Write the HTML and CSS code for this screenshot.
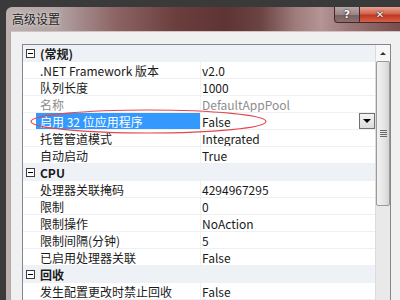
FILE: index.html
```html
<!DOCTYPE html>
<html lang="zh-CN">
<head>
<meta charset="utf-8">
<title>高级设置</title>
<link rel="stylesheet" href="styles.css">
</head>
<body>
<div class="screen">
  <div class="window">
    <div class="titlebar">
      <span class="title">高级设置</span>
      <div class="caption-buttons">
        <div class="cbtn help">?</div>
        <div class="cbtn close">✕</div>
      </div>
    </div>
    <div class="client">
      <div class="grid">
        <div class="rows">
          <div class="row cat"><span class="gutter"><span class="toggle"></span></span><span class="label">(常规)</span></div>
          <div class="row"><span class="gutter"></span><span class="label">.NET Framework 版本</span><span class="value">v2.0</span></div>
          <div class="row"><span class="gutter"></span><span class="label">队列长度</span><span class="value">1000</span></div>
          <div class="row readonly"><span class="gutter"></span><span class="label">名称</span><span class="value">DefaultAppPool</span></div>
          <div class="row selected"><span class="gutter"></span><span class="label">启用 32 位应用程序</span><span class="value">False<span class="dropdown"><span class="tri"></span></span></span></div>
          <div class="row"><span class="gutter"></span><span class="label">托管管道模式</span><span class="value">Integrated</span></div>
          <div class="row"><span class="gutter"></span><span class="label">自动启动</span><span class="value">True</span></div>
          <div class="row cat"><span class="gutter"><span class="toggle"></span></span><span class="label">CPU</span></div>
          <div class="row"><span class="gutter"></span><span class="label">处理器关联掩码</span><span class="value">4294967295</span></div>
          <div class="row"><span class="gutter"></span><span class="label">限制</span><span class="value">0</span></div>
          <div class="row"><span class="gutter"></span><span class="label">限制操作</span><span class="value">NoAction</span></div>
          <div class="row"><span class="gutter"></span><span class="label">限制间隔(分钟)</span><span class="value">5</span></div>
          <div class="row"><span class="gutter"></span><span class="label">已启用处理器关联</span><span class="value">False</span></div>
          <div class="row cat"><span class="gutter"><span class="toggle"></span></span><span class="label">回收</span></div>
          <div class="row"><span class="gutter"></span><span class="label">发生配置更改时禁止回收</span><span class="value">False</span></div>
        </div>
        <div class="scrollbar">
          <div class="sb-up"><span class="up-tri"></span></div>
          <div class="sb-thumb"><span class="grip"></span></div>
          <div class="sb-track"></div>
        </div>
      </div>
    </div>
  </div>
  <svg class="annotation" width="400" height="300" viewBox="0 0 400 300">
    <ellipse cx="148.5" cy="121.5" rx="117.5" ry="11.5" fill="none" stroke="#e2474c" stroke-width="1.2"/>
  </svg>
</div>
</body>
</html>
```
FILE: styles.css
```css
* { box-sizing: border-box; }
html, body { margin: 0; padding: 0; }
body {
  width: 400px;
  height: 300px;
  overflow: hidden;
  background: #3a3a3a;
  font-family: "Noto Sans CJK SC", "Noto Sans", sans-serif;
  font-size: 12px;
  color: #1a1a1a;
}
.screen {
  position: relative;
  width: 400px;
  height: 300px;
  padding: 7px 0 0 6px;
  overflow: hidden;
}
.window {
  width: 394px;
  height: 293px;
  border-radius: 6px 0 0 0;
  background: linear-gradient(90deg, #bcb0b0 0px, #b4a4a4 50px, #8c6464 110px, #6c3e3e 170px, #5e3434 220px, #6c4444 255px, #a07c7c 290px, #b49494 315px, #9a7474 345px, #7a4c4c 394px);
  padding-left: 4px;
  display: flex;
  flex-direction: column;
  overflow: hidden;
}
.titlebar {
  height: 24px;
  flex-shrink: 0;
  display: flex;
  align-items: flex-start;
}
.title {
  margin: 4px 0 0 2px;
  font-size: 12px;
  line-height: 16px;
  color: #1c1c1c;
  text-shadow: 0 0 4px rgba(255,255,255,0.6), 0 0 2px rgba(255,255,255,0.5);
}
.caption-buttons {
  margin-left: auto;
  display: flex;
  height: 16px;
}
.cbtn {
  height: 16px;
  display: flex;
  align-items: center;
  justify-content: center;
  color: #fff;
  font-family: "DejaVu Sans", sans-serif;
  font-weight: bold;
  font-size: 11px;
  text-shadow: 0 0 2px #333, 0 0 1px #000;
  border: 1px solid #3e2a2a;
  border-top: none;
}
.help {
  width: 25px;
  border-radius: 0 0 0 4px;
  border-right: none;
  background: linear-gradient(180deg, #b8a8a8 0%, #9a8484 50%, #7a6060 55%, #8c7070 100%);
}
.close {
  width: 41px;
  border-right: none;
  background: linear-gradient(180deg, #e8a494 0%, #d06450 45%, #c03820 55%, #d8604a 100%);
  font-size: 10px;
}
.client {
  flex: 1 1 auto;
  min-height: 0;
  overflow: hidden;
  background: #f0f0f0;
  border-top: 1px solid #cfc4c4;
  border-left: 1px solid #b4a8a8;
  padding: 12px 9px 0 11px;
}
.grid {
  width: 369px;
  height: 260px;
  border: 1px solid #828790;
  border-bottom: none;
  background: #fff;
  display: flex;
}
.rows {
  flex: 1;
  display: flex;
  flex-direction: column;
}
.row {
  height: 17px;
  display: flex;
  flex-shrink: 0;
  border-bottom: 1px solid #eef0f3;
  white-space: nowrap;
}
.gutter {
  width: 13px;
  flex-shrink: 0;
  display: flex;
  align-items: center;
}
.label {
  width: 164px;
  height: 16px;
  line-height: 18px;
  flex-shrink: 0;
  padding-left: 4px;
  overflow: hidden;
}
.value {
  flex: 1;
  height: 16px;
  line-height: 18px;
  overflow: hidden;
  display: flex;
  align-items: flex-start;
  padding-left: 1px;
  border-left: 1px solid #eef0f3;
}
.cat {
  background: #eef2f7;
  border-bottom-color: #eef2f7;
}
.cat .label {
  font-weight: bold;
  width: auto;
}
.toggle {
  width: 9px;
  height: 9px;
  margin-left: 3px;
  border: 1px solid #3c3c3c;
  background: #fff;
  position: relative;
  display: block;
}
.toggle::after {
  content: "";
  position: absolute;
  left: 1px;
  top: 3px;
  width: 5px;
  height: 1px;
  background: #000;
}
.readonly .label, .readonly .value { color: #8d8d8d; }
.selected .label {
  background: #3399ff;
  color: #fff;
}
.dropdown {
  margin-left: auto;
  width: 16px;
  height: 16px;
  border: 1px solid #707070;
  background: linear-gradient(180deg, #f4f4f4, #dcdcdc);
  display: flex;
  align-items: center;
  justify-content: center;
}
.tri {
  width: 0;
  height: 0;
  border-left: 4px solid transparent;
  border-right: 4px solid transparent;
  border-top: 4px solid #000;
}
.scrollbar {
  width: 15px;
  display: flex;
  flex-direction: column;
  background: #e9e9e9;
  border-left: 1px solid #dcdcdc;
}
.sb-up {
  height: 16px;
  flex-shrink: 0;
  display: flex;
  align-items: center;
  justify-content: center;
  background: #f7f7f7;
}
.up-tri {
  width: 0;
  height: 0;
  border-left: 3px solid transparent;
  border-right: 3px solid transparent;
  border-bottom: 3px solid #333;
}
.sb-thumb {
  height: 145px;
  flex-shrink: 0;
  border: 1px solid #9a9a9a;
  border-radius: 2px;
  background: linear-gradient(90deg, #f2f2f2, #e4e4e4 60%, #d4d4d4);
  display: flex;
  align-items: center;
  justify-content: center;
}
.grip {
  width: 7px;
  height: 7px;
  background: repeating-linear-gradient(180deg, #6a6a6a 0 1px, transparent 1px 2px);
}
.sb-track { flex: 1; }
.annotation {
  position: absolute;
  left: 0;
  top: 0;
  pointer-events: none;
}
```
